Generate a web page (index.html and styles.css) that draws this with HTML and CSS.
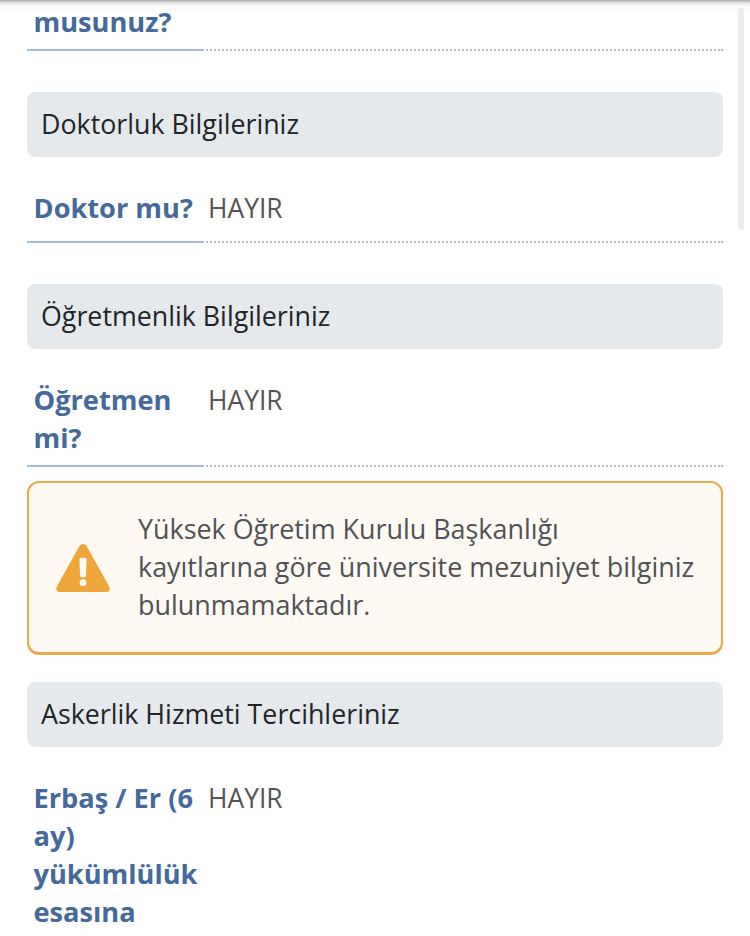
FILE: index.html
```html
<!DOCTYPE html>
<html lang="tr">
<head>
<meta charset="utf-8">
<title>Bilgiler</title>
<link rel="stylesheet" href="styles.css">
</head>
<body>
<div class="topshade"></div>
<div class="scrollbar"></div>
<main class="content">
  <div class="row">
    <div class="label">Kayıtlı musunuz?</div>
    <div class="value"></div>
  </div>
  <h2 class="section">Doktorluk Bilgileriniz</h2>
  <div class="row">
    <div class="label">Doktor mu?</div>
    <div class="value">HAYIR</div>
  </div>
  <h2 class="section">Öğretmenlik Bilgileriniz</h2>
  <div class="row">
    <div class="label">Öğretmen mi?</div>
    <div class="value">HAYIR</div>
  </div>
  <div class="alert">
    <svg class="alert-icon" viewBox="0 0 54 48" width="54" height="48" aria-hidden="true">
      <path d="M27 0c1.500 0 2.800.8 3.600 2.100l22.800 41c1.300 2.400-.2 4.900-3 4.900H3.600c-2.800 0-4.300-2.500-3-4.900l22.800-41C24.200.8 25.500 0 27 0z" fill="#efa73c"/>
      <path d="M23.400 15.500c0-1 .8-1.700 1.700-1.700h3.800c.9 0 1.700.7 1.700 1.700l-.7 16.200c0 .9-.7 1.500-1.600 1.500h-2.600c-.9 0-1.600-.6-1.600-1.500z" fill="#fef9f3"/>
      <circle cx="27" cy="38.700" r="3.400" fill="#fef9f3"/>
    </svg>
    <p class="alert-text">Yüksek Öğretim Kurulu Başkanlığı<br>kayıtlarına göre üniversite mezuniyet bilginiz bulunmamaktadır.</p>
  </div>
  <h2 class="section section-after-alert">Askerlik Hizmeti Tercihleriniz</h2>
  <div class="row">
    <div class="label">Erbaş / Er (6 ay) yükümlülük esasına</div>
    <div class="value">HAYIR</div>
  </div>
</main>
</body>
</html>
```
FILE: styles.css
```css
* { box-sizing: border-box; }
html, body { margin: 0; height: 100%; overflow: hidden; background: #fff; }
body { font-family: "Open Sans", "Noto Sans", sans-serif; font-size: 26.8px; line-height: 38px; color: #212529; }
.topshade { position: fixed; top: 0; left: 0; right: 0; height: 14px; z-index: 2; background: linear-gradient(#a8a8a8 0, #d4d4d4 2px, #efefef 4px, #f9f9f9 7px, rgba(255,255,255,0) 14px); }
.scrollbar { position: fixed; top: 8px; right: 6px; width: 6px; height: 222px; border-radius: 3px; background: #ececec; z-index: 2; }
.content { margin: -35px 27px 0; }
.row { display: flex; min-height: 54px; padding-bottom: 8px; border-bottom: 2px dotted #b1bdc6; }
.label { position: relative; flex: none; width: 175px; padding: 0 2px 0 6.5px; font-size: 27.2px; font-weight: 700; color: #44699a; }
.label::after { content: ""; position: absolute; left: 0; right: 0; bottom: -10px; height: 2px; background: #a6bad2; }
.value { padding-left: 6px; font-size: 26.4px; color: #555; }
.section { height: 65px; margin: 41px 0 32px; padding: 12.5px 14px; background: #e6e9ec; border-radius: 8px; font-size: 26.8px; line-height: 38px; font-weight: 400; color: #212529; }
.section-after-alert { margin-top: 27px; }
.alert { display: flex; align-items: center; height: 174px; margin-top: 14px; padding: 0 20px 0 27px; background: #fef9f3; border: 2px solid #e9ab4a; border-bottom-width: 3px; border-radius: 12px; }
.alert-icon { flex: none; margin-right: 28px; }
.alert-text { margin: 0 0 2px; font-size: 26.9px; color: #4f5256; }
```
